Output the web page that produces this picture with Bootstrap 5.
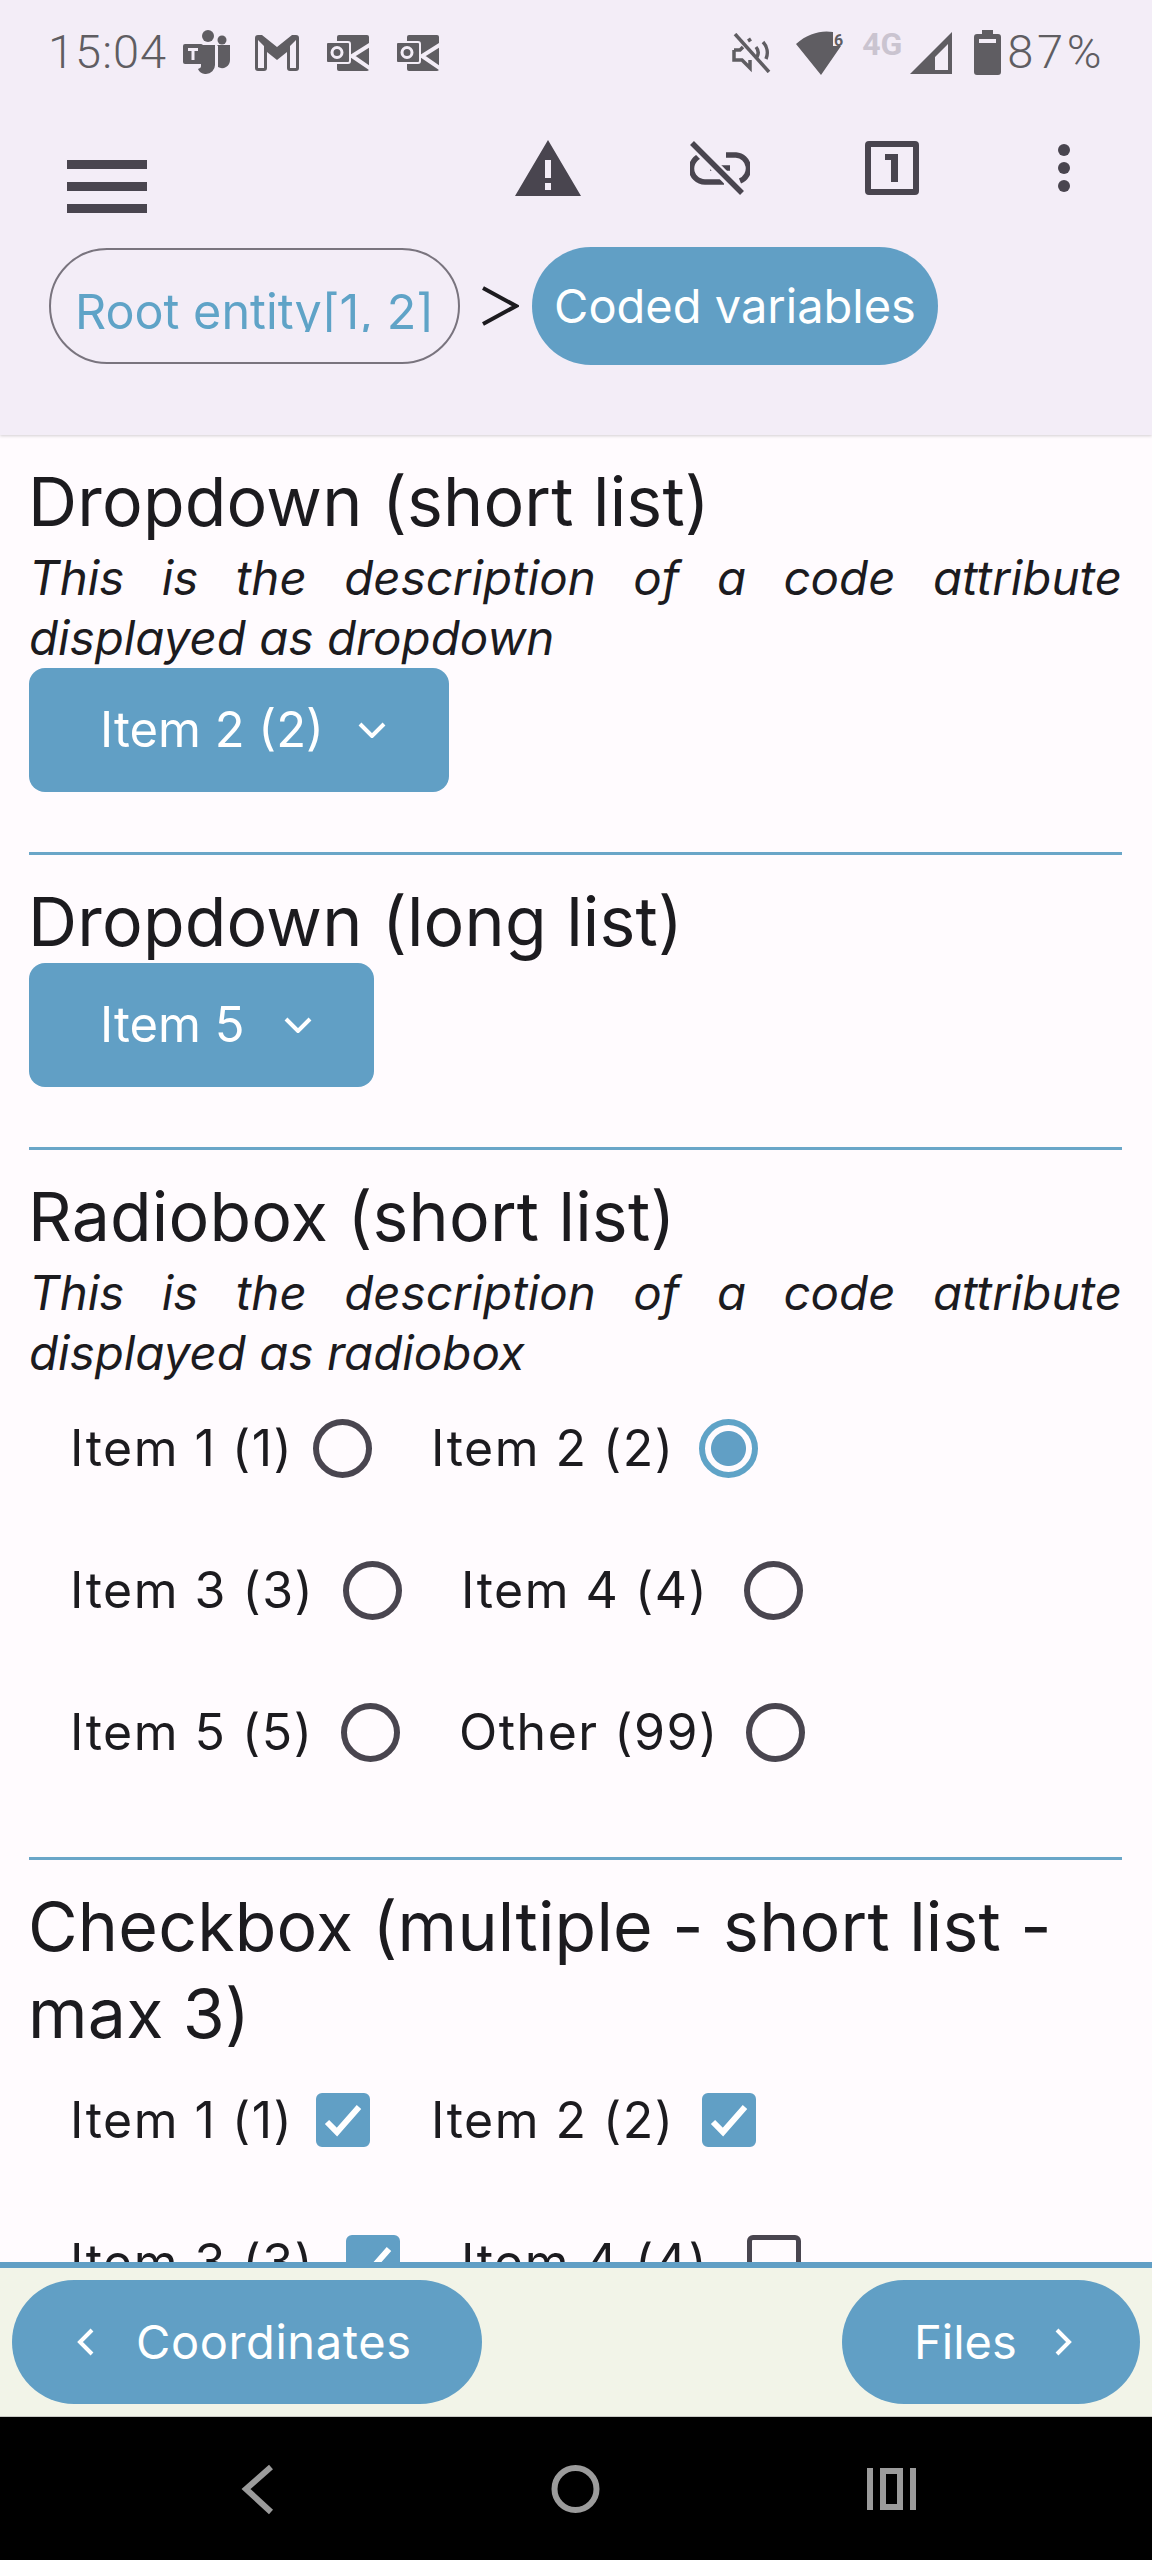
<!doctype html>
<html lang="en">
<head>
<meta charset="utf-8">
<title>Coded variables</title>
<link href="https://cdn.jsdelivr.net/npm/bootstrap@5.3.0/dist/css/bootstrap.min.css" rel="stylesheet">
<style>
:root{--app-blue:#619fc5;--ink:#1c1b1f;--ic:#49454f;--sb:#5f5d62}
html,body{height:2560px;overflow:hidden}
body{font-family:Inter,"Noto Sans",sans-serif;color:var(--ink);background:#fffbfe}
.screen{width:1152px;height:2560px}
.top-area{background:#f3edf7;height:435px;box-shadow:0 1px 3px rgba(0,0,0,.18);z-index:2;position:relative}
.status{height:105px;padding:0 50px 0 48px;color:var(--sb);font-family:Roboto,sans-serif;font-size:47px;font-weight:300;letter-spacing:1px}
.status svg{display:block;fill:var(--sb)}
.s-time{width:135px}
.s-pct{letter-spacing:3.6px;margin-right:-3px}
.s-m1{margin-left:23px}.s-m2{margin-left:26px}
.s-net{font-size:32px;font-weight:700;color:#cac4d0;font-family:Roboto,sans-serif;line-height:1;margin:0 8px 17px 16px;letter-spacing:0}
.s-batt{margin-left:22px;margin-right:6px}
.appbar{height:126px;padding:0 2px 0 67px}
.appbar svg{display:block;fill:var(--ic)}
.ham{margin-top:36px}
.slot{width:172px}
.crumbs{padding:0 0 0 49px;height:117px;margin-top:16px}
.pill-out{height:116px;width:411px;border:2px solid #79747e;border-radius:58px;color:#5fa3c7;font-size:48.5px;overflow:hidden}
.pill-clip{height:46px;overflow:hidden;line-height:51px;margin-top:6px;white-space:nowrap}
.crumb-sep{width:72px;padding-left:8px}
.pill-on{height:118px;width:406px;border-radius:59px;background:var(--app-blue);color:#fff;font-size:47px;padding-top:2px}
.form-area{padding:0 30px 0 29px;min-height:0;overflow:hidden}
.q-block{padding-top:23px;padding-bottom:60px;border-bottom:3px solid #6aa6c8}
.q-last{border-bottom:0;padding-bottom:0}
.q-title{font-size:68px;line-height:87px;font-weight:400;margin:0 0 0 -1px;color:var(--ink);letter-spacing:.2px}
.q-desc{font-size:47.5px;line-height:60px;font-style:italic;text-align:justify;margin:3px 0 0}
.btn.pick{background:var(--app-blue);border:0;color:#fff;height:124px;border-radius:16px;font-size:49px;font-family:inherit;padding:0 0 0 71px;gap:39px;display:inline-flex;align-items:center}
.btn.pick-a{gap:34px}
.pick svg{width:28px;height:16px;fill:none;stroke:#fff;stroke-width:4}
.pick-up{margin-top:-2px}
.opt-row{height:130px;margin-bottom:12px;padding-left:41px;font-size:50px;letter-spacing:1.5px}
.opt-row:last-child{margin-bottom:0}
.opt-row label{display:flex;align-items:center;gap:29px;margin:0 59px 0 0}
.opt-txt{white-space:nowrap}
.w-i1{width:214px}.w-i2{width:239px}.w-i3{width:244px}.w-i4{width:254px}.w-i5{width:242px}.w-o{width:258px}
.form-check-input.rad{width:59px;height:59px;margin:0;border:6px solid var(--ic);background:transparent;box-shadow:none}
.form-check-input.rad:checked{border-color:#5fa3c7;background-image:radial-gradient(circle,#619fc5 0 17px,transparent 18px);background-color:transparent;background-size:auto}
.form-check-input.chk{width:54px;height:54px;margin:0 2.5px;border:5px solid var(--ic);border-radius:6px;background-color:transparent;box-shadow:none}
.form-check-input.chk:checked{border-color:var(--app-blue);background-color:var(--app-blue);background-size:100%;background-image:url("data:image/svg+xml,%3csvg xmlns='http://www.w3.org/2000/svg' viewBox='0 0 44 44'%3e%3cpath fill='none' stroke='%23fff' stroke-width='6' d='M6 24l10 10L38 9'/%3e%3c/svg%3e")}
.q-cut{margin-top:-2px}
.bottom-bar{height:155px;border-top:6px solid #619fc5;background:#f2f4e8;padding:12px 12px 0 12px;border-bottom:1px solid #c9c9c4;z-index:2}
.btn.go{background:var(--app-blue);color:#fff;border:0;height:124px;border-radius:62px;font-size:47px;display:flex;align-items:center;font-family:inherit;padding:0}
.go svg{fill:none;stroke:#fff;stroke-width:4}
.go-prev{width:470px;padding-left:65px!important;gap:41px;letter-spacing:.6px}
.go-next{width:298px;padding-left:72px!important;gap:37px}
.navbar-sys{height:143px;background:#000}
.navbar-sys svg{display:block;fill:none;stroke:#9b9b9b}
</style>
</head>
<body>
<div class="screen d-flex flex-column">
  <header class="top-area flex-shrink-0">
    <div class="status d-flex align-items-center">
      <span class="s-time">15:04</span>
      <svg width="49" height="46" viewBox="0 0 49 46"><circle cx="25" cy="6" r="6"/><circle cx="39" cy="10" r="4.5"/><path d="M16 15h16v20a9 9 0 0 1-9 9h-1a8 8 0 0 1-7-5l2-1a2 2 0 0 0 1-2V15z"/><path d="M34 15h13v15a8 8 0 0 1-12 7V16z"/><rect x="0" y="14" width="20" height="20" rx="2"/><path d="M5 18h10v3h-3.500v9h-3v-9H5z" fill="#f3edf7"/></svg>
      <svg class="s-m1" width="44" height="36" viewBox="0 0 44 36"><path fill-rule="evenodd" d="M3 0h4l15 12L37 0h4a3 3 0 0 1 3 3v30a3 3 0 0 1-3 3h-6a3 3 0 0 1-3-3V17L22 25 12 17v16a3 3 0 0 1-3 3H3a3 3 0 0 1-3-3V3a3 3 0 0 1 3-3zm0 5v28h6V11zm38 0L35 11v22h6z"/></svg>
      <svg class="s-m2" width="44" height="36" viewBox="0 0 44 36"><rect x="12" y="0" width="32" height="36" rx="2"/><path d="M46 9L27 21l19 13" fill="none" stroke="#f3edf7" stroke-width="4"/><rect x="1" y="7" width="24" height="21" rx="2" stroke="#f3edf7" stroke-width="2"/><circle cx="12" cy="17.500" r="5" fill="none" stroke="#f3edf7" stroke-width="3"/></svg>
      <svg class="s-m2" width="44" height="36" viewBox="0 0 44 36"><rect x="12" y="0" width="32" height="36" rx="2"/><path d="M46 9L27 21l19 13" fill="none" stroke="#f3edf7" stroke-width="4"/><rect x="1" y="7" width="24" height="21" rx="2" stroke="#f3edf7" stroke-width="2"/><circle cx="12" cy="17.500" r="5" fill="none" stroke="#f3edf7" stroke-width="3"/></svg>
      <span class="flex-grow-1"></span>
      <svg width="40" height="40" viewBox="0 0 40 40"><g fill="none" stroke="#5f5d62" stroke-width="3.500"><path d="M3 1l34 38"/><path d="M2 17h6l3 -3M2 17v10h8l8 8v-8"/><path d="M19 6l-3 2M24 14a9 9 0 0 1 1 10M31 9a16 16 0 0 1 3 17"/></g></svg>
      <svg class="ms-4" width="50" height="44" viewBox="0 0 50 44"><path d="M0 13C12 2 26-1 37 1v14h8L25 44z"/><text x="38" y="15" font-size="16" font-family="Roboto" font-weight="700">6</text></svg>
      <span class="s-net">4G</span>
      <svg width="42" height="42" viewBox="0 0 42 42"><path fill-rule="evenodd" d="M42 0v42H0zM38 12L25 25v13h13z"/></svg>
      <svg class="s-batt" width="27" height="45" viewBox="0 0 27 45"><path fill-rule="evenodd" d="M8 0h11v4h5a3 3 0 0 1 3 3v35a3 3 0 0 1-3 3H3a3 3 0 0 1-3-3V7a3 3 0 0 1 3-3h5zM5 9v4h17V9z"/></svg>
      <span class="s-pct">87%</span>
    </div>
    <div class="appbar d-flex align-items-center">
      <svg class="ham" width="80" height="53" viewBox="0 0 80 53"><path d="M0 0h80v9H0zM0 22h80v9H0zM0 44h80v9H0z"/></svg>
      <span class="flex-grow-1"></span>
      <div class="slot d-flex justify-content-center"><svg width="66" height="56" viewBox="0 0 66 56"><path fill-rule="evenodd" d="M33 0l33 56H0zM30 20v18h6V20zM30 43v7h6v-7z"/></svg></div>
      <div class="slot d-flex justify-content-center"><svg width="60" height="54" viewBox="0 0 60 54"><g fill="none" stroke="#49454f" stroke-width="5.500"><path d="M15 14A13.500 13.500 0 0 0 15 41H34"/><path d="M36 14H46A13.500 13.500 0 0 1 50 40"/><path d="M20 27H40"/><path d="M1 1L52 53" stroke="#f3edf7" stroke-width="11"/><path d="M2 2L52 52"/></g></svg></div>
      <div class="slot d-flex justify-content-center"><svg width="54" height="54" viewBox="0 0 54 54"><path fill-rule="evenodd" d="M4 0h46a4 4 0 0 1 4 4v46a4 4 0 0 1-4 4H4a4 4 0 0 1-4-4V4a4 4 0 0 1 4-4zm2 6v42h42V6zM20 13h13v28h-7V19h-6z"/></svg></div>
      <div class="slot d-flex justify-content-center"><svg width="14" height="48" viewBox="0 0 14 48"><circle cx="7" cy="6" r="6"/><circle cx="7" cy="24" r="6"/><circle cx="7" cy="42" r="6"/></svg></div>
    </div>
    <nav class="crumbs d-flex align-items-center">
      <a class="pill-out d-flex align-items-center justify-content-center text-decoration-none"><span class="pill-clip">Root entity[1, 2]</span></a>
      <span class="crumb-sep d-flex justify-content-center"><svg width="37" height="40" viewBox="0 0 37 40" fill="none" stroke="#1c1b1f" stroke-width="4"><path d="M1 2l33 18L1 38"/></svg></span>
      <a class="pill-on d-flex align-items-center justify-content-center text-decoration-none">Coded variables</a>
    </nav>
  </header>

  <main class="form-area flex-grow-1">
    <section class="q-block">
      <h2 class="q-title">Dropdown (short list)</h2>
      <p class="q-desc">This is the description of a code attribute displayed as dropdown</p>
      <button class="btn pick pick-a" style="width:420px">Item 2 (2) <svg viewBox="0 0 28 16"><path d="M2 2l12 12L26 2"/></svg></button>
    </section>
    <section class="q-block">
      <h2 class="q-title">Dropdown (long list)</h2>
      <button class="btn pick pick-up" style="width:345px">Item 5 <svg viewBox="0 0 28 16"><path d="M2 2l12 12L26 2"/></svg></button>
    </section>
    <section class="q-block">
      <h2 class="q-title">Radiobox (short list)</h2>
      <p class="q-desc">This is the description of a code attribute displayed as radiobox</p>
      <div class="opt-row d-flex align-items-center"><label><span class="opt-txt w-i1">Item 1 (1)</span><input class="form-check-input rad" type="radio" name="r1"></label><label><span class="opt-txt w-i2">Item 2 (2)</span><input class="form-check-input rad" type="radio" name="r1" checked></label></div>
      <div class="opt-row d-flex align-items-center"><label><span class="opt-txt w-i3">Item 3 (3)</span><input class="form-check-input rad" type="radio" name="r1"></label><label><span class="opt-txt w-i4">Item 4 (4)</span><input class="form-check-input rad" type="radio" name="r1"></label></div>
      <div class="opt-row d-flex align-items-center"><label><span class="opt-txt w-i5">Item 5 (5)</span><input class="form-check-input rad" type="radio" name="r1"></label><label><span class="opt-txt w-o">Other (99)</span><input class="form-check-input rad" type="radio" name="r1"></label></div>
    </section>
    <section class="q-block q-last">
      <h2 class="q-title">Checkbox (multiple - short list - max 3)</h2>
      <div class="q-cut">
      <div class="opt-row d-flex align-items-center"><label><span class="opt-txt w-i1">Item 1 (1)</span><input class="form-check-input chk" type="checkbox" checked></label><label><span class="opt-txt w-i2">Item 2 (2)</span><input class="form-check-input chk" type="checkbox" checked></label></div>
      <div class="opt-row d-flex align-items-center"><label><span class="opt-txt w-i3">Item 3 (3)</span><input class="form-check-input chk" type="checkbox" checked></label><label><span class="opt-txt w-i4">Item 4 (4)</span><input class="form-check-input chk" type="checkbox"></label></div>
      </div>
    </section>
  </main>

  <footer class="bottom-bar flex-shrink-0 d-flex justify-content-between align-items-start">
    <button class="btn go go-prev"><svg width="18" height="28" viewBox="0 0 18 28"><path d="M15 2L3 14l12 12"/></svg>Coordinates</button>
    <button class="btn go go-next">Files<svg width="18" height="28" viewBox="0 0 18 28"><path d="M3 2l12 12L3 26"/></svg></button>
  </footer>
  <div class="navbar-sys flex-shrink-0 d-flex align-items-center position-relative">
    <svg width="1152" height="143" viewBox="0 0 1152 143"><path stroke-width="6" d="M271 50L246 72l25 23"/><circle cx="575.500" cy="72" r="21" stroke-width="6"/><path stroke-width="6" d="M870 51v42M913 51v42"/><rect x="883" y="54" width="17" height="36" stroke-width="6"/></svg>
  </div>
</div>
</body>
</html>
